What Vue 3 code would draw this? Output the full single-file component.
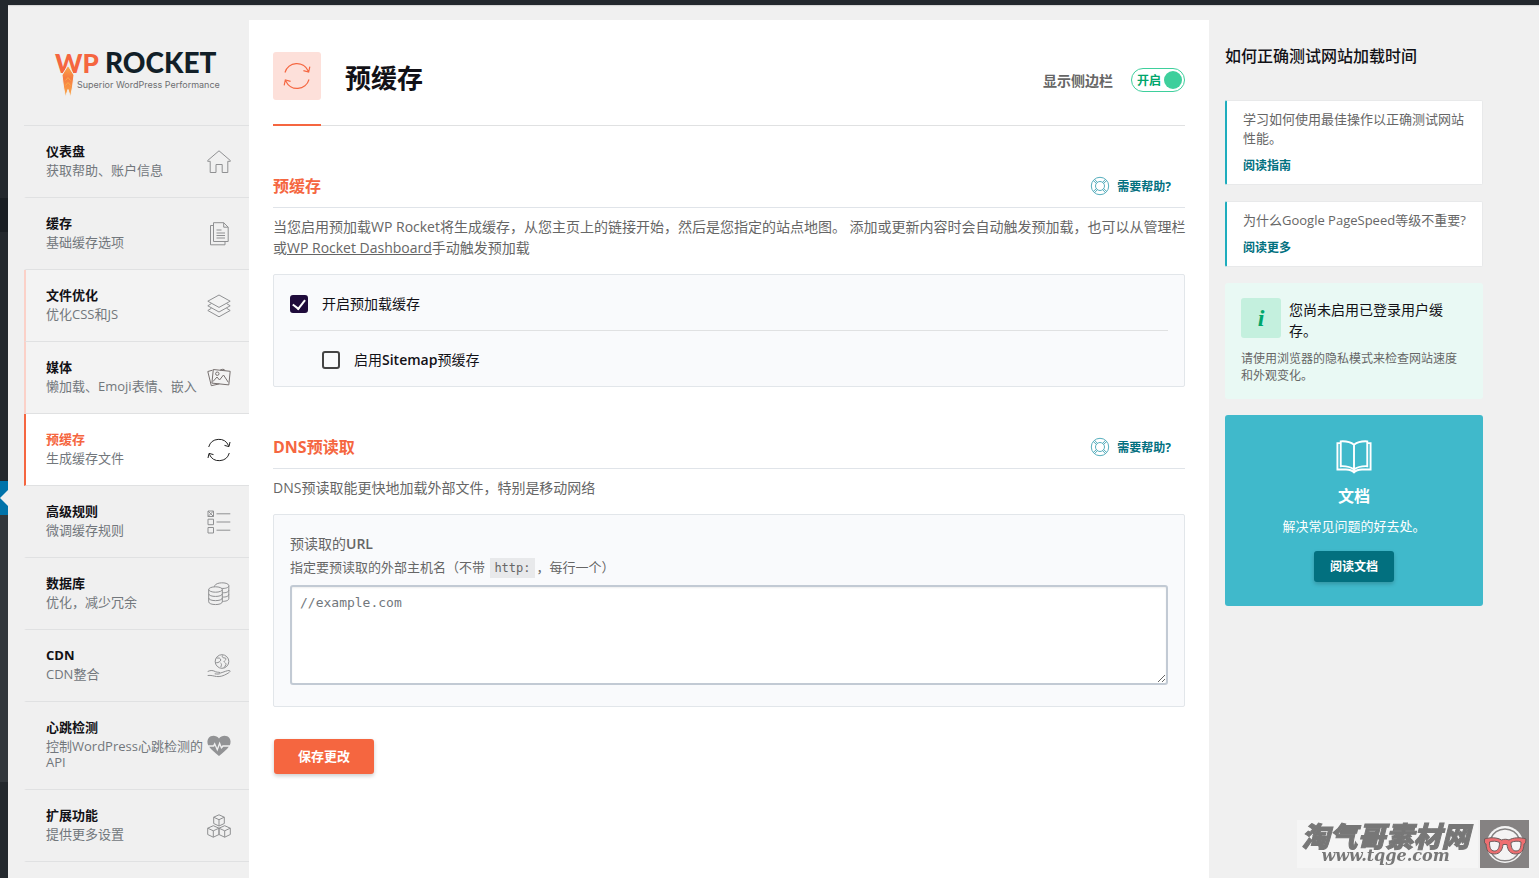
<script setup>
import { ref } from 'vue'

const navItems = [
  { id: 'dashboard', title: '仪表盘', desc: '获取帮助、账户信息' },
  { id: 'cache', title: '缓存', desc: '基础缓存选项' },
  { id: 'files', title: '文件优化', desc: '优化CSS和JS', state: 'soft' },
  { id: 'media', title: '媒体', desc: '懒加载、Emoji表情、嵌入', state: 'soft' },
  { id: 'preload', title: '预缓存', desc: '生成缓存文件', state: 'active' },
  { id: 'rules', title: '高级规则', desc: '微调缓存规则' },
  { id: 'database', title: '数据库', desc: '优化，减少冗余' },
  { id: 'cdn', title: 'CDN', desc: 'CDN整合' },
  { id: 'heartbeat', title: '心跳检测', desc: '控制WordPress心跳检测的API' },
  { id: 'addons', title: '扩展功能', desc: '提供更多设置' }
]

const articles = [
  { text: '学习如何使用最佳操作以正确测试网站性能。', link: '阅读指南' },
  { text: '为什么Google PageSpeed等级不重要?', link: '阅读更多' }
]

const showSidebar = ref(true)
const preload = ref(true)
const sitemap = ref(false)
const urls = ref('')
</script>

<template>
  <div class="page">
    <div class="topbar"></div>
    <div class="shell">
      <div class="rail">
        <span class="rail-a"></span>
        <span class="rail-b"></span>
        <span class="rail-c"></span>
        <span class="rail-current"></span>
        <span class="rail-d"></span>
        <span class="rail-e"></span>
      </div>

      <nav class="nav">
        <div class="logo">
          <svg width="168" height="50" viewBox="0 0 168 50" role="img" aria-label="WP Rocket">
            <defs>
              <linearGradient id="flame" x1="0" y1="0" x2="0" y2="1">
                <stop offset="0" stop-color="#fbab4a" />
                <stop offset="0.4" stop-color="#f67b41" />
                <stop offset="1" stop-color="#fbab4a" />
              </linearGradient>
            </defs>
            <text x="1" y="23" class="logo-wp">WP</text>
            <text x="51" y="23" class="logo-rocket">ROCKET</text>
            <path d="M14 15.500L20 25l-1.500 12-2 10L14 39.500 11.500 47l-2-10L8 25z" fill="url(#flame)" stroke="#f0f0f0" stroke-width="1" />
            <path d="M11.500 35.500l2.500-3 2.500 3M11.500 30.500l2.500-3 2.500 3" fill="none" stroke="#fbab4a" stroke-width="1" />
            <text x="23" y="38" class="logo-tag">Superior WordPress Performance</text>
          </svg>
        </div>

        <a
          v-for="item in navItems"
          :key="item.id"
          href="#"
          class="nav-item"
          :class="item.state"
        >
          <span class="nav-text">
            <strong>{{ item.title }}</strong>
            <span class="nav-desc">{{ item.desc }}</span>
          </span>
          <svg class="nav-icon" width="24" height="24" viewBox="0 0 24 24" aria-hidden="true">
            <g v-if="item.id === 'dashboard'">
              <path d="M.7 11.300V10.500L12 .8l11.300 9.700v.8h-2.500v11.200h-5.600v-8H9v8H3.200V11.300z" />
            </g>
            <g v-else-if="item.id === 'cache'">
              <path d="M6.500.7h10.200l4.500 4.500v14.300H6.500zM16.700.7v4.500h4.500" />
              <path d="M6.500 3.500H3.500v19.300h14.500v-3M9.500 8h5M9.500 11h8.500M9.500 13.500h8.500M9.500 16h8.500" />
            </g>
            <g v-else-if="item.id === 'files'">
              <path d="M12 1l11.200 6.200L12 13.400.8 7.200z" />
              <path d="M4.500 9.500L.8 11.800 12 18l11.200-6.200-3.700-2.300" />
              <path d="M4.500 14.200L.8 16.500 12 22.800l11.200-6.300-3.700-2.300" />
            </g>
            <g v-else-if="item.id === 'media'" class="dark">
              <path d="M6.300 3.500l16.900 1.800-1.400 13.600L4.900 17.100z" />
              <path d="M5.500 4.200L.8 5.500l3.500 14.200 8-1.800M13 4.200l2.200-.9 2 .2.600 1.100" />
              <path d="M6 15.500l4-4.500 2.500 3 4-5 4.800 7.300" />
              <circle cx="10.300" cy="7.700" r="1.700" />
            </g>
            <g v-else-if="item.id === 'preload'">
              <path d="M1.700 9A10.600 10.600 0 0 1 21.600 7.700M23 4l-1 4.600-4.500-1.200" />
              <path d="M22.300 15A10.600 10.600 0 0 1 2.400 16.300M1 20l1-4.600 4.500 1.200" />
            </g>
            <g v-else-if="item.id === 'rules'">
              <path d="M1 1h5.500v5.500H1zM1 9.200h5.500v5.500H1zM1 17.500h5.500V23H1zM1 1l5.500 5.500M6.500 1L1 6.500M9.500 3.800h13.800M9.500 12h13.800M9.500 20.200h13.800" />
            </g>
            <g v-else-if="item.id === 'database'">
              <ellipse cx="8.500" cy="7.500" rx="6.800" ry="2.700" />
              <path d="M1.700 7.500v12.300c0 3.700 13.600 3.700 13.600 0V7.500M1.700 11.800c0 3.500 13.600 3.500 13.600 0M1.700 16c0 3.500 13.600 3.500 13.600 0" />
              <path d="M7.500 4.700C7.500-.3 21.800-.3 21.800 3.700v13c0 1.700-3 2.700-6.500 2.700M21.800 3.700c0 2-3.500 3-7.300 2.700M21.800 8c0 2-3 3-6.500 2.700M21.800 12.300c0 2-3 3-6.500 2.700" />
            </g>
            <g v-else-if="item.id === 'cdn'">
              <circle cx="15" cy="7.500" r="6.800" />
              <path d="M9.500 4c2 .3 3-.5 4 1s-1 3-2.500 3.500-2 0-2.500-.5M15.500 1.500c-1 2 1 2.500 2.500 2.500s1 2-.5 3 2 2 1.500 3.500-1.500 2-2 3.200M13.500 9c1.500.5 1 2.500.3 4" />
              <path d="M.7 17.500c3-1.500 5.500-1.200 8 .3 2 .8 5 0 4.500 1.500-.5 1-3.500.8-5.500.5M13.500 19c3-.8 7-2.800 9-2.500 1.500.5 0 2-2.500 3.300-3.500 2-7 3.200-10.500 2.700-3-.4-5.500-1.500-8.800-1" />
            </g>
            <g v-else-if="item.id === 'heartbeat'" class="solid">
              <path d="M12 4.500C9.500 1 4 .8 1.600 4c-1.500 2-1.500 5-.4 7.300h5l1.500-3 2.500 5.800 2.400-6.500 2 5 1-1.300h7.200C23.900 9 23.900 6 22.400 4 20 .8 14.500 1 12 4.500z" />
              <path d="M2.200 12.800h4.900l.7-1.300 2.500 6 2.400-6.200 1.500 3.700 2.200-2.200h5.400C20 15.500 15.500 19 12 22 8.500 19 4 15.500 2.200 12.800z" />
            </g>
            <g v-else>
              <path d="M12 .8l5.300 2.400v6.300L12 12 6.700 9.500V3.200zM6.700 3.200L12 5.700l5.300-2.500M12 5.700V12" />
              <path d="M6.300 11.700l5.700 2.500v6.300l-5.700 2.700-5.600-2.700v-6.300zM.7 14.200l5.600 2.600 5.700-2.600M6.300 16.800v6.400" />
              <path d="M17.700 11.700l5.600 2.500v6.300l-5.600 2.700-5.700-2.700v-6.300zM12 14.200l5.700 2.600 5.600-2.600M17.700 16.800v6.400" />
            </g>
          </svg>
        </a>
      </nav>

      <main class="content">
        <header class="head">
          <span class="head-icon">
            <svg width="28" height="28" viewBox="0 0 24 24" aria-hidden="true">
              <path d="M1.700 9A10.600 10.600 0 0 1 21.600 7.700M23 4l-1 4.600-4.500-1.200" />
              <path d="M22.300 15A10.600 10.600 0 0 1 2.400 16.300M1 20l1-4.600 4.500 1.200" />
            </svg>
          </span>
          <h1>预缓存</h1>
          <label class="toggle">
            <span class="toggle-label">显示侧边栏</span>
            <input v-model="showSidebar" type="checkbox" />
            <span class="switch"><span>开启</span><i></i></span>
          </label>
        </header>

        <section>
          <div class="section-head">
            <h2>预缓存</h2>
            <a href="#" class="help">
              <svg width="20" height="20" viewBox="0 0 20 20" aria-hidden="true">
                <circle cx="10" cy="10" r="8.700" />
                <circle cx="10" cy="10" r="4.500" />
                <path d="M3.300 4.500l3.200 3M4.500 3.300l3 3.200M16.700 4.500l-3.200 3M15.500 3.300l-3 3.200M3.300 15.500l3.200-3M4.500 16.700l3-3.200M16.700 15.500l-3.200-3M15.500 16.700l-3-3.200" />
              </svg>
              <span>需要帮助?</span>
            </a>
          </div>
          <p class="intro">当您启用预加载WP Rocket将生成缓存，从您主页上的链接开始，然后是您指定的站点地图。 添加或更新内容时会自动触发预加载，也可以从管理栏或<a href="#">WP Rocket Dashboard</a>手动触发预加载</p>
          <div class="panel">
            <label class="option">
              <input v-model="preload" type="checkbox" />
              <span>开启预加载缓存</span>
            </label>
            <label class="option child">
              <input v-model="sitemap" type="checkbox" />
              <span>启用<b>Sitemap</b>预缓存</span>
            </label>
          </div>
        </section>

        <section>
          <div class="section-head">
            <h2>DNS预读取</h2>
            <a href="#" class="help">
              <svg width="20" height="20" viewBox="0 0 20 20" aria-hidden="true">
                <circle cx="10" cy="10" r="8.700" />
                <circle cx="10" cy="10" r="4.500" />
                <path d="M3.300 4.500l3.200 3M4.500 3.300l3 3.200M16.700 4.500l-3.200 3M15.500 3.300l-3 3.200M3.300 15.500l3.200-3M4.500 16.700l3-3.200M16.700 15.500l-3.200-3M15.500 16.700l-3-3.200" />
              </svg>
              <span>需要帮助?</span>
            </a>
          </div>
          <p class="intro">DNS预读取能更快地加载外部文件，特别是移动网络</p>
          <div class="panel field">
            <label for="dns-urls">预读取的<b>URL</b></label>
            <p>指定要预读取的外部主机名（不带 <code>http:</code>，每行一个）</p>
            <textarea id="dns-urls" v-model="urls" placeholder="//example.com"></textarea>
          </div>
        </section>

        <button type="button" class="save">保存更改</button>
      </main>

      <aside class="side">
        <h2>如何正确测试网站加载时间</h2>
        <article v-for="article in articles" :key="article.link" class="card">
          <p>{{ article.text }}</p>
          <a href="#">{{ article.link }}</a>
        </article>
        <div class="notice">
          <div class="notice-top">
            <span class="notice-icon">i</span>
            <h3>您尚未启用已登录用户缓存。</h3>
          </div>
          <p>请使用浏览器的隐私模式来检查网站速度和外观变化。</p>
        </div>
        <div class="docs">
          <svg width="36" height="36" viewBox="0 0 38 36" aria-hidden="true">
            <path d="M19 5C15.500 2.300 10 1.200 5 1.500v26.200c5-.2 10.500.8 14 3.500 3.500-2.700 9-3.700 14-3.500V1.500C28 1.200 22.500 2.300 19 5zM19 5v29" />
            <path d="M5 3.300H1.500v27.900h9c3.500 0 6.500.8 8.500 3 2-2.200 5-3 8.500-3h9V3.300H33" />
          </svg>
          <h3>文档</h3>
          <p>解决常见问题的好去处。</p>
          <a href="#" class="docs-button">阅读文档</a>
        </div>
      </aside>
    </div>

    <div class="stamp">
      <div class="stamp-text">
        <strong>淘气哥素材网</strong>
        <span>www.tqge.com</span>
      </div>
      <svg width="49" height="48" viewBox="0 0 49 48" aria-hidden="true">
        <rect width="49" height="48" fill="#858282" />
        <circle cx="25" cy="24.500" r="18.500" fill="#f4f4f4" />
        <path d="M10.500 19a15.500 15.500 0 0 1 29 0M11 32a15.500 15.500 0 0 0 28 0" fill="#f4f4f4" stroke="#858282" stroke-width="1.500" />
        <path d="M4.500 19c6-2 13-1.500 17 1 2.500-1 5-1 7.500 0 4-2.500 11-3 17-1l-.5 4-1.500 1c-.3 6-2 10-8.500 10-5.500 0-8-4-8.500-9.500h-4C22.500 30 20 34 14.500 34 8 34 6.300 30 6 24l-1.500-1z" fill="#ee6e70" stroke="#6b5c5c" stroke-width="1" />
        <path d="M9.500 22c3-1.300 7-1 10 .5 0 5-1.500 8.500-5 8.500-4 0-5-3.500-5-9zM41 22c-3-1.300-7-1-10 .5 0 5 1.500 8.500 5 8.500 4 0 5-3.500 5-9z" fill="#f4f4f4" stroke="#6b5c5c" stroke-width="1" />
      </svg>
    </div>
  </div>
</template>

<style>
body {
  margin: 0;
  background: #f0f0f0;
}
</style>

<style scoped>
* {
  box-sizing: border-box;
}

.page {
  display: flex;
  flex-direction: column;
  min-height: 100vh;
  color: #666;
  font: 14px/21px "Open Sans", "Noto Sans CJK SC", sans-serif;
}

h1, h2, h3, p {
  margin: 0;
}

a {
  color: inherit;
  text-decoration: none;
}

svg {
  display: block;
  flex: none;
}

.topbar {
  height: 5px;
  background: #23282d;
  box-shadow: 0 1px 1px rgba(0, 0, 0, 0.1);
}

.shell {
  display: flex;
  flex: 1;
}

/* collapsed admin menu edge */
.rail {
  display: flex;
  flex-direction: column;
  width: 8px;
  margin-right: 16px;
}
.rail-a { height: 193px; background: #23282d; }
.rail-b { height: 34px; background: #191e23; }
.rail-c { height: 249px; background: #23282d; }
.rail-d { height: 267px; background: #32373c; }
.rail-e { flex: 1; background: #23282d; }
.rail-current {
  display: flex;
  align-items: center;
  height: 34px;
  background: #0073aa;
}
.rail-current::after {
  content: "";
  border: 8px solid transparent;
  border-left-width: 0;
  border-right-color: #f0f0f0;
}

.nav {
  flex: none;
  width: 225px;
}
.logo {
  height: 121px;
  padding: 45px 0 0 30px;
  border-bottom: 1px solid #e0e1e2;
}
.logo svg { overflow: visible; }
.logo-wp, .logo-rocket {
  font: 900 27px Lato, sans-serif;
  fill: #f56640;
}
.logo-wp { font-size: 26px; }
.logo-rocket {
  font-size: 28px;
  fill: #121f28;
}
.logo-tag {
  font: 400 9px Inter, sans-serif;
  fill: #6d6e70;
}

.nav-item {
  display: flex;
  align-items: center;
  justify-content: space-between;
  padding: 17px 18px 19px 20px;
  border-bottom: 1px solid #e0e1e2;
  border-left: 2px solid transparent;
}
.nav-text {
  display: flex;
  flex: 1;
  flex-direction: column;
  gap: 3px;
}
.nav-text strong {
  color: #121116;
  font-size: 13px;
  line-height: 16px;
}
.nav-desc {
  margin-right: -4px;
  color: #72777c;
  font-size: 13px;
  line-height: 16px;
}
.nav-icon {
  margin: 2px 0 0 7px;
  fill: none;
  stroke: #8f9092;
  stroke-width: 1;
}
.nav-icon .dark { stroke: #77706f; }
.nav-icon .solid {
  fill: #929395;
  stroke: none;
}
.soft {
  border-left-color: #fbd1c8;
  background: #f3f3f3;
}
.active {
  border-left-color: #f56640;
  background: #fff;
}
.active strong { color: #f56640; }
.active .nav-icon { stroke: #222; }

.content {
  flex: 1;
  min-width: 0;
  margin-top: 15px;
  padding: 32px 24px;
  background: #fff;
}
.head {
  position: relative;
  display: flex;
  align-items: flex-start;
  height: 74px;
  border-bottom: 1px solid #e0e1e2;
}
.head::after {
  content: "";
  position: absolute;
  bottom: -1px;
  left: 0;
  width: 48px;
  height: 2px;
  background: #f56640;
}
.head-icon {
  display: flex;
  align-items: center;
  justify-content: center;
  width: 48px;
  height: 48px;
  border-radius: 3px;
  background: #fde0da;
}
.head-icon svg {
  fill: none;
  stroke: #f56640;
}
.head h1 {
  flex: 1;
  margin-left: 24px;
  color: #121116;
  font-size: 26px;
  line-height: 52px;
}
.toggle {
  display: flex;
  align-items: center;
  height: 56px;
  font-weight: 600;
}
.toggle input {
  position: absolute;
  opacity: 0;
}
.switch {
  display: flex;
  align-items: center;
  justify-content: space-between;
  width: 54px;
  height: 24px;
  margin-left: 18px;
  padding: 0 2px 0 5px;
  border: 1px solid #3ecf9c;
  border-radius: 12px;
  color: #00a66b;
  font-size: 12px;
  font-weight: 700;
}
.switch i {
  width: 18px;
  height: 18px;
  border-radius: 50%;
  background: #3ecf9c;
}

section { margin-top: 38px; }
.section-head {
  display: flex;
  align-items: center;
  justify-content: space-between;
  height: 44px;
  padding-right: 14px;
  border-bottom: 1px solid #e0e4e9;
}
.section-head h2 {
  padding-top: 2px;
  color: #f56640;
  font-size: 16px;
}
.help {
  display: flex;
  align-items: center;
  gap: 7px;
  color: #02707f;
  font-size: 12px;
  font-weight: 700;
}
.help span { padding-top: 1px; }
.help svg {
  fill: none;
  stroke: #56aebd;
  stroke-width: 1;
}
.intro {
  margin-right: -4px;
  padding: 8px 0 16px;
}
.intro a { text-decoration: underline; }
.panel {
  padding: 0 16px;
  border: 1px solid #e2e6ea;
  border-radius: 2px;
  background: #f9fafc;
}
.option {
  display: flex;
  align-items: center;
  gap: 14px;
  height: 56px;
  padding-top: 2px;
  border-bottom: 1px solid #e0e1e2;
  color: #121116;
}
.option b, .field b { font-weight: 600; }
.option.child {
  height: 55px;
  padding-left: 32px;
  border-bottom: 0;
}
.option input {
  display: grid;
  place-content: center;
  width: 18px;
  height: 18px;
  margin: 0;
  border: 2px solid #444;
  border-radius: 3px;
  appearance: none;
}
.option input:checked {
  border-color: #1f0b3b;
  background: #1f0b3b;
}
.option input:checked::after {
  content: "";
  width: 6px;
  height: 10px;
  margin-bottom: 2px;
  border: solid #fff;
  border-width: 0 2px 2px 0;
  transform: rotate(38deg);
}

.field {
  display: flex;
  flex-direction: column;
  padding: 19px 16px 21px;
}
.field label { line-height: 20px; }
.field p {
  margin: 2px 0 7px;
  font-size: 13px;
  line-height: 22px;
}
.field code {
  display: inline-block;
  margin: 0 2px;
  padding: 0 4px;
  background: #e8e9eb;
  font: 12px/20px "DejaVu Sans Mono", monospace;
}
textarea {
  height: 100px;
  padding: 6px 8px;
  border: 2px solid #c2cad4;
  border-radius: 3px;
  box-shadow: inset 0 1px 2px rgba(0, 0, 0, 0.07);
  background: #fff;
  font: 13px/20px "DejaVu Sans Mono", monospace;
  resize: vertical;
}
textarea::placeholder { color: #72777c; }

.save {
  width: 100px;
  height: 35px;
  margin: 32px 0 0 1px;
  padding: 0;
  border: 0;
  border-radius: 3px;
  background: #f56640;
  box-shadow: 0 2px 4px rgba(0, 0, 0, 0.2);
  color: #fff;
  font: 700 13px/35px "Open Sans", "Noto Sans CJK SC", sans-serif;
}

.side {
  display: flex;
  flex: none;
  flex-direction: column;
  gap: 16px;
  width: 258px;
  margin: 40px 56px 0 16px;
}
.side h2 {
  margin-bottom: 17px;
  color: #121116;
  font-size: 16px;
  font-weight: 500;
  line-height: 22px;
}
.card {
  padding: 9px 16px;
  border: 1px solid #e8e9ea;
  border-left: 2px solid #1eadbd;
  border-radius: 2px;
  background: #fff;
}
.card p {
  margin-bottom: 8px;
  font-size: 13px;
  line-height: 19px;
}
.card a {
  display: block;
  color: #02707f;
  font-size: 12px;
  font-weight: 700;
  line-height: 19px;
}
.notice {
  padding: 15px 16px;
  border-radius: 3px;
  background: #e9f9f4;
}
.notice-top {
  display: flex;
  gap: 8px;
}
.notice-icon {
  flex: none;
  width: 40px;
  height: 40px;
  border-radius: 3px;
  background: #c4f0de;
  color: #00a66b;
  font: italic 700 24px/40px "Liberation Serif", serif;
  text-align: center;
}
.notice .notice-top h3 {
  padding: 1px 16px 0 0;
  color: #121116;
  font-size: 14px;
  font-weight: 400;
}
.notice p {
  margin-top: 9px;
  font-size: 12px;
  line-height: 17px;
}
.docs {
  display: flex;
  flex-direction: column;
  align-items: center;
  padding: 24px;
  border-radius: 3px;
  background: #40b9cb;
  color: #fff;
}
.docs svg {
  fill: none;
  stroke: #fff;
  stroke-width: 2;
}
.docs h3 {
  margin-top: 11px;
  font-size: 16px;
}
.docs p {
  margin: 9px 0 14px;
  font-size: 13px;
}
.docs-button {
  width: 80px;
  border-radius: 3px;
  background: #02707f;
  box-shadow: 0 2px 4px rgba(0, 0, 0, 0.2);
  font-size: 12px;
  font-weight: 700;
  line-height: 31px;
  text-align: center;
}

.stamp {
  position: fixed;
  right: 10px;
  bottom: 10px;
  display: flex;
  gap: 2px;
}
.stamp-text {
  display: flex;
  flex-direction: column;
  align-items: center;
  width: 181px;
  height: 48px;
  padding: 2px 4px 0 0;
  background: #f5f5f5;
  color: #777;
}
.stamp-text strong {
  font-size: 28px;
  font-style: italic;
  font-weight: 900;
  line-height: 28px;
  -webkit-text-stroke: 1px #777;
}
.stamp-text span {
  font: italic 700 16px/12px "DejaVu Serif", serif;
}
</style>
